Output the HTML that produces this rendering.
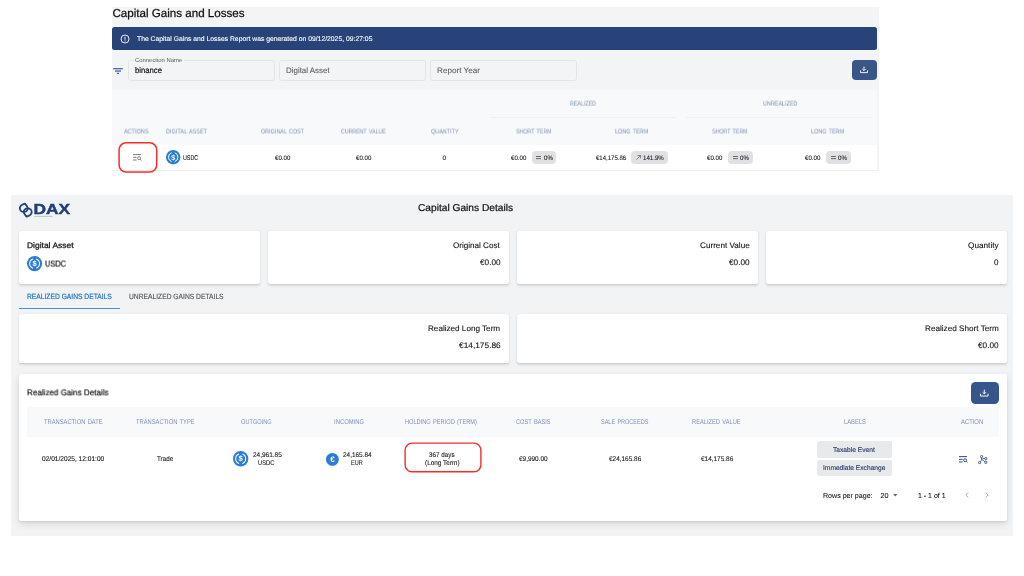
<!DOCTYPE html>
<html lang="en">
<head>
<meta charset="utf-8">
<title>Capital Gains and Losses</title>
<style>
html,body{margin:0;padding:0;background:#fff;}
body{width:1024px;height:576px;position:relative;overflow:hidden;font-family:"Liberation Sans", sans-serif;text-rendering:geometricPrecision;}
#page{position:absolute;left:0;top:0;width:1024px;height:576px;will-change:transform;}
.t{position:absolute;white-space:pre;line-height:1;transform-origin:0 0;}
svg{position:absolute;overflow:visible;}
</style>
</head>
<body>
<div id="page">
<div style="position:absolute;left:112px;top:7px;width:767px;height:164px;background:#f3f4f6;border-radius:0px;"></div>
<div style="position:absolute;left:112px;top:27px;width:765px;height:23.4px;background:#284377;border-radius:2.5px;"></div>
<svg style="left:120.3px;top:33.6px" width="10" height="10" viewBox="0 0 10 10"><circle cx="5" cy="5" r="4" fill="none" stroke="#fff" stroke-width="0.9"/><rect x="4.55" y="2.8" width="0.9" height="2.9" fill="#fff"/><rect x="4.55" y="6.4" width="0.9" height="0.9" fill="#fff"/></svg>
<svg style="left:113px;top:68px" width="10" height="6" viewBox="0 0 10 6"><g fill="#2f4d8f"><rect x="0.2" y="0.2" width="9.6" height="1.1"/><rect x="2" y="2.5" width="6" height="1.1"/><rect x="3.9" y="4.8" width="2.2" height="1.1"/></g></svg>
<div style="position:absolute;left:128px;top:60px;width:147px;height:21px;background:transparent;border-radius:2.5px;border:1px solid #e3e4e6;box-sizing:border-box;"></div>
<div style="position:absolute;left:278.6px;top:60px;width:147px;height:21px;background:transparent;border-radius:2.5px;border:1px solid #e3e4e6;box-sizing:border-box;"></div>
<div style="position:absolute;left:430px;top:60px;width:147px;height:21px;background:transparent;border-radius:2.5px;border:1px solid #e3e4e6;box-sizing:border-box;"></div>
<div style="position:absolute;left:133.5px;top:60px;width:50px;height:2px;background:#f3f4f6;border-radius:0px;"></div>
<div style="position:absolute;left:851.8px;top:60.3px;width:25px;height:19.8px;background:#3a5688;border-radius:4px;"></div>
<svg style="left:860.3px;top:66.2px" width="8" height="7.2" viewBox="0 0 8 7.2"><g fill="none" stroke="#fff" stroke-width="0.9"><path d="M4 0.6 V4.4 M2.4 3 L4 4.6 L5.6 3"/><path d="M0.5 4.4 V6.6 H7.5 V4.4"/></g></svg>
<div style="position:absolute;left:112px;top:90px;width:765px;height:55px;background:#f8f9fb;border-radius:0px;"></div>
<div style="position:absolute;left:112px;top:145px;width:765px;height:25px;background:#fff;border-radius:0px;"></div>
<div style="position:absolute;left:112px;top:170px;width:765px;height:1px;background:#eef0f2;border-radius:0px;"></div>
<div style="position:absolute;left:490px;top:117px;width:186px;height:1px;background:#eef0f3;border-radius:0px;"></div>
<div style="position:absolute;left:686px;top:117px;width:186px;height:1px;background:#eef0f3;border-radius:0px;"></div>
<svg style="left:117px;top:141px" width="42" height="32" viewBox="0 0 42 32"><rect x="2.1" y="1.8" width="37.6" height="29.2" rx="7" fill="none" stroke="#fa2b2b" stroke-width="1.5"/></svg>
<svg style="left:132.6px;top:154.1px" width="9.0" height="7.0" viewBox="0 0 9 7"><g fill="#777a80"><rect x="0" y="0.1" width="8" height="1"/><rect x="0" y="2.8" width="3.6" height="1"/><rect x="0" y="5.5" width="3.6" height="1"/></g><circle cx="6.1" cy="4.2" r="1.5" fill="none" stroke="#777a80" stroke-width="0.95"/><path d="M7.2 5.3 L8.5 6.6" stroke="#777a80" stroke-width="0.95"/></svg>
<svg style="left:166.0px;top:150.20000000000002px" width="14.4" height="14.4" viewBox="0 0 32 32"><circle cx="16" cy="16" r="16" fill="#2a7cd6"/><path d="M12.5 6.2 A10.4 10.4 0 0 0 12.5 25.8 M19.5 6.2 A10.4 10.4 0 0 1 19.5 25.8" fill="none" stroke="#fff" stroke-width="2.2"/><text x="16" y="21.8" text-anchor="middle" font-family="Liberation Sans, sans-serif" font-weight="700" font-size="16" fill="#fff">$</text></svg>
<div style="position:absolute;left:531.8px;top:151px;width:24.4px;height:12.6px;background:#e0e1e4;border-radius:4px;"></div>
<div style="position:absolute;left:631.4px;top:151px;width:36.6px;height:12.6px;background:#e0e1e4;border-radius:4px;"></div>
<div style="position:absolute;left:728px;top:151px;width:24.6px;height:12.6px;background:#e0e1e4;border-radius:4px;"></div>
<div style="position:absolute;left:826px;top:151px;width:24.5px;height:12.6px;background:#e0e1e4;border-radius:4px;"></div>
<svg style="left:536.3px;top:155.6px" width="5" height="3.4" viewBox="0 0 5 3.4"><rect x="0" y="0.3" width="5" height="0.7" fill="#333"/><rect x="0" y="2.4" width="5" height="0.7" fill="#333"/></svg>
<svg style="left:732.5px;top:155.6px" width="5" height="3.4" viewBox="0 0 5 3.4"><rect x="0" y="0.3" width="5" height="0.7" fill="#333"/><rect x="0" y="2.4" width="5" height="0.7" fill="#333"/></svg>
<svg style="left:830.5px;top:155.6px" width="5" height="3.4" viewBox="0 0 5 3.4"><rect x="0" y="0.3" width="5" height="0.7" fill="#333"/><rect x="0" y="2.4" width="5" height="0.7" fill="#333"/></svg>
<svg style="left:635.8px;top:154.8px" width="5" height="5" viewBox="0 0 5 5"><path d="M0.4 4.6 L4.5 0.5 M1.6 0.5 H4.5 V3.4" fill="none" stroke="#444" stroke-width="0.6"/></svg>
<div style="position:absolute;left:10.8px;top:195px;width:1002.5px;height:341.4px;background:#f2f3f5;border-radius:0px;"></div>
<svg style="left:18px;top:202px" width="54" height="17" viewBox="0 0 54 17"><g fill="none" stroke="#213f7a" stroke-width="1.8" stroke-linejoin="round"><path d="M6.9 1.6 C4.2 2.4 1.8 4.2 1.8 6.2 C1.8 8.4 3.6 9.9 5.8 9.9 C8 9.9 9.8 8.3 9.8 6.2 C9.8 4.6 8.4 3.4 6.9 1.6 Z"/><path d="M8.6 14.6 C11.3 13.8 13.7 12 13.7 10 C13.7 7.8 11.9 6.3 9.7 6.3 C7.5 6.3 5.7 7.9 5.7 10 C5.7 11.6 7.1 12.8 8.6 14.6 Z"/></g><text x="15.6" y="11.6" font-family="Liberation Sans, sans-serif" font-weight="700" font-size="14.4" fill="#213f7a" stroke="#213f7a" stroke-width="0.45" textLength="36.6" lengthAdjust="spacingAndGlyphs">DAX</text><rect x="16.2" y="13.9" width="18.4" height="0.8" fill="#aab7d2"/></svg>
<div style="position:absolute;left:19px;top:231.2px;width:240.5px;height:52.8px;background:#fff;border-radius:2.5px;box-shadow:0 1.5px 3px rgba(0,0,0,0.11),0 0.5px 1.5px rgba(0,0,0,0.06);"></div>
<div style="position:absolute;left:268px;top:231.2px;width:240.5px;height:52.8px;background:#fff;border-radius:2.5px;box-shadow:0 1.5px 3px rgba(0,0,0,0.11),0 0.5px 1.5px rgba(0,0,0,0.06);"></div>
<div style="position:absolute;left:517px;top:231.2px;width:240.5px;height:52.8px;background:#fff;border-radius:2.5px;box-shadow:0 1.5px 3px rgba(0,0,0,0.11),0 0.5px 1.5px rgba(0,0,0,0.06);"></div>
<div style="position:absolute;left:766px;top:231.2px;width:240.5px;height:52.8px;background:#fff;border-radius:2.5px;box-shadow:0 1.5px 3px rgba(0,0,0,0.11),0 0.5px 1.5px rgba(0,0,0,0.06);"></div>
<svg style="left:27.0px;top:256.0px" width="15.2" height="15.2" viewBox="0 0 32 32"><circle cx="16" cy="16" r="16" fill="#2a7cd6"/><path d="M12.5 6.2 A10.4 10.4 0 0 0 12.5 25.8 M19.5 6.2 A10.4 10.4 0 0 1 19.5 25.8" fill="none" stroke="#fff" stroke-width="2.2"/><text x="16" y="21.8" text-anchor="middle" font-family="Liberation Sans, sans-serif" font-weight="700" font-size="16" fill="#fff">$</text></svg>
<div style="position:absolute;left:19px;top:308px;width:101px;height:1px;background:#4a90d9;border-radius:0px;"></div>
<div style="position:absolute;left:19px;top:314px;width:489.5px;height:49.2px;background:#fff;border-radius:2.5px;box-shadow:0 1.5px 3px rgba(0,0,0,0.11),0 0.5px 1.5px rgba(0,0,0,0.06);"></div>
<div style="position:absolute;left:517px;top:314px;width:489.5px;height:49.2px;background:#fff;border-radius:2.5px;box-shadow:0 1.5px 3px rgba(0,0,0,0.11),0 0.5px 1.5px rgba(0,0,0,0.06);"></div>
<div style="position:absolute;left:19px;top:374px;width:987.5px;height:146.5px;background:#fff;border-radius:2.5px;box-shadow:0 3px 7px rgba(0,0,0,0.12),0 1px 2px rgba(0,0,0,0.07);"></div>
<div style="position:absolute;left:971px;top:382px;width:27.6px;height:21.5px;background:#36558b;border-radius:4.5px;"></div>
<svg style="left:980.3px;top:388.6px" width="8.6" height="7.7" viewBox="0 0 8 7.2"><g fill="none" stroke="#fff" stroke-width="0.9"><path d="M4 0.6 V4.4 M2.4 3 L4 4.6 L5.6 3"/><path d="M0.5 4.4 V6.6 H7.5 V4.4"/></g></svg>
<div style="position:absolute;left:27px;top:407px;width:971.5px;height:29.5px;background:#f8f9fb;border-radius:0px;"></div>
<svg style="left:233.10000000000002px;top:451.0px" width="15.4" height="15.4" viewBox="0 0 32 32"><circle cx="16" cy="16" r="16" fill="#2a7cd6"/><path d="M12.5 6.2 A10.4 10.4 0 0 0 12.5 25.8 M19.5 6.2 A10.4 10.4 0 0 1 19.5 25.8" fill="none" stroke="#fff" stroke-width="2.2"/><text x="16" y="21.8" text-anchor="middle" font-family="Liberation Sans, sans-serif" font-weight="700" font-size="16" fill="#fff">$</text></svg>
<svg style="left:326.3px;top:452.5px" width="12.8" height="12.8" viewBox="0 0 32 32"><circle cx="16" cy="16" r="16" fill="#2a7cd6"/><text x="16.5" y="23" text-anchor="middle" font-family="Liberation Sans, sans-serif" font-weight="700" font-size="20" fill="#fff">€</text></svg>
<svg style="left:403px;top:441px" width="80" height="33" viewBox="0 0 80 33"><rect x="2.1" y="2.1" width="75.8" height="28.6" rx="7" fill="none" stroke="#fa2b2b" stroke-width="1.4"/></svg>
<div style="position:absolute;left:817px;top:441.3px;width:75px;height:16.3px;background:#e8e9eb;border-radius:2.5px;"></div>
<div style="position:absolute;left:817px;top:459.8px;width:75px;height:16.5px;background:#e8e9eb;border-radius:2.5px;"></div>
<svg style="left:958.8px;top:455.5px" width="9.0" height="7.0" viewBox="0 0 9 7"><g fill="#2f4a80"><rect x="0" y="0.1" width="8" height="1"/><rect x="0" y="2.8" width="3.6" height="1"/><rect x="0" y="5.5" width="3.6" height="1"/></g><circle cx="6.1" cy="4.2" r="1.5" fill="none" stroke="#2f4a80" stroke-width="0.95"/><path d="M7.2 5.3 L8.5 6.6" stroke="#2f4a80" stroke-width="0.95"/></svg>
<svg style="left:977.5px;top:454.5px" width="10" height="9.5" viewBox="0 0 10 9.5"><g fill="none" stroke="#2f4a80" stroke-width="0.9"><circle cx="3.6" cy="1.6" r="1.1"/><circle cx="1.6" cy="7.6" r="1.1"/><circle cx="7.8" cy="3.6" r="1.1"/><circle cx="7.8" cy="7.4" r="1.1"/><path d="M3.6 2.7 C3.6 5.5 3 6 2.2 6.7 M3.7 4.6 C5 5 6 5.6 6.9 6.8 M4.6 3.6 H6.7"/></g></svg>
<svg style="left:892.8px;top:494px" width="4.6" height="2.6" viewBox="0 0 5 3"><path d="M0 0 H5 L2.5 2.8 Z" fill="#666"/></svg>
<svg style="left:964.5px;top:492.2px" width="4" height="6" viewBox="0 0 4 6"><path d="M3.4 0.5 L0.8 3 L3.4 5.5" fill="none" stroke="#a0a0a0" stroke-width="0.9"/></svg>
<svg style="left:985.3px;top:492.2px" width="4" height="6" viewBox="0 0 4 6"><path d="M0.6 0.5 L3.2 3 L0.6 5.5" fill="none" stroke="#a0a0a0" stroke-width="0.9"/></svg>
<div class="t" style="left:112.43px;top:8px;font-size:11.6px;color:#111;-webkit-text-stroke:0.25px #111;">Capital Gains and Losses</div>
<div class="t" style="left:136.88px;top:36px;font-size:6.8px;color:#fff;-webkit-text-stroke:0.1px #fff;transform:translateY(0.70px);will-change:transform;">The Capital Gains and Losses Report was generated on 09/12/2025, 09:27:05</div>
<div class="t" style="left:135.00px;top:58px;font-size:5.8px;color:#555;transform:translateY(0.73px) scaleX(1.0177);will-change:transform;">Connection Name</div>
<div class="t" style="left:135.00px;top:67px;font-size:8.2px;color:#111;-webkit-text-stroke:0.2px #111;transform:scaleX(0.9411);">binance</div>
<div class="t" style="left:285.90px;top:67px;font-size:8.0px;color:#5f5f5f;-webkit-text-stroke:0.1px #5f5f5f;transform:scaleX(0.9918);">Digital Asset</div>
<div class="t" style="left:437.00px;top:67px;font-size:8.0px;color:#5f5f5f;-webkit-text-stroke:0.1px #5f5f5f;transform:scaleX(1.0191);">Report Year</div>
<div class="t" style="left:570.00px;top:101px;font-size:6.5px;color:#7e90b0;transform:translateY(0.60px) scaleX(0.8190);will-change:transform;">REALIZED</div>
<div class="t" style="left:762.50px;top:101px;font-size:6.5px;color:#7e90b0;transform:translateY(0.60px) scaleX(0.8293);will-change:transform;">UNREALIZED</div>
<div class="t" style="left:124.44px;top:129px;font-size:6.5px;color:#7e90b0;transform:translateY(0.50px) scaleX(0.8542);will-change:transform;">ACTIONS</div>
<div class="t" style="left:166.00px;top:129px;font-size:6.5px;color:#7e90b0;word-spacing:0.9px;transform:translateY(0.50px) scaleX(0.8493);will-change:transform;">DIGITAL ASSET</div>
<div class="t" style="left:261.00px;top:129px;font-size:6.5px;color:#7e90b0;word-spacing:0.9px;transform:translateY(0.50px) scaleX(0.8340);will-change:transform;">ORIGINAL COST</div>
<div class="t" style="left:341.25px;top:129px;font-size:6.5px;color:#7e90b0;word-spacing:0.9px;transform:translateY(0.50px) scaleX(0.8117);will-change:transform;">CURRENT VALUE</div>
<div class="t" style="left:430.75px;top:129px;font-size:6.5px;color:#7e90b0;transform:translateY(0.50px) scaleX(0.8427);will-change:transform;">QUANTITY</div>
<div class="t" style="left:515.88px;top:129px;font-size:6.5px;color:#7e90b0;word-spacing:0.9px;transform:translateY(0.50px) scaleX(0.8168);will-change:transform;">SHORT TERM</div>
<div class="t" style="left:615.00px;top:129px;font-size:6.5px;color:#7e90b0;word-spacing:0.9px;transform:translateY(0.50px) scaleX(0.8462);will-change:transform;">LONG TERM</div>
<div class="t" style="left:711.88px;top:129px;font-size:6.5px;color:#7e90b0;word-spacing:0.9px;transform:translateY(0.50px) scaleX(0.8168);will-change:transform;">SHORT TERM</div>
<div class="t" style="left:811.00px;top:129px;font-size:6.5px;color:#7e90b0;word-spacing:0.9px;transform:translateY(0.50px) scaleX(0.8462);will-change:transform;">LONG TERM</div>
<div class="t" style="left:183.20px;top:155px;font-size:7.0px;color:#111;-webkit-text-stroke:0.1px #111;transform:scaleX(0.7627);">USDC</div>
<div class="t" style="left:274.70px;top:156px;font-size:6.5px;color:#111;-webkit-text-stroke:0.08px #111;transform:scaleX(0.9404);">€0.00</div>
<div class="t" style="left:355.70px;top:156px;font-size:6.5px;color:#111;-webkit-text-stroke:0.08px #111;transform:scaleX(0.9404);">€0.00</div>
<div class="t" style="left:442.53px;top:156px;font-size:6.5px;color:#111;-webkit-text-stroke:0.08px #111;">0</div>
<div class="t" style="left:511.30px;top:156px;font-size:6.5px;color:#111;-webkit-text-stroke:0.08px #111;transform:scaleX(0.9404);">€0.00</div>
<div class="t" style="left:543.80px;top:156px;font-size:6.5px;color:#111;-webkit-text-stroke:0.08px #111;transform:scaleX(0.9556);">0%</div>
<div class="t" style="left:595.60px;top:156px;font-size:6.5px;color:#111;-webkit-text-stroke:0.08px #111;transform:scaleX(0.9262);">€14,175.86</div>
<div class="t" style="left:643.21px;top:156px;font-size:6.5px;color:#111;-webkit-text-stroke:0.08px #111;transform:scaleX(0.9451);">141.9%</div>
<div class="t" style="left:707.30px;top:156px;font-size:6.5px;color:#111;-webkit-text-stroke:0.08px #111;transform:scaleX(0.9404);">€0.00</div>
<div class="t" style="left:740.00px;top:156px;font-size:6.5px;color:#111;-webkit-text-stroke:0.08px #111;transform:scaleX(0.9556);">0%</div>
<div class="t" style="left:805.40px;top:156px;font-size:6.5px;color:#111;-webkit-text-stroke:0.08px #111;transform:scaleX(0.9404);">€0.00</div>
<div class="t" style="left:838.00px;top:156px;font-size:6.5px;color:#111;-webkit-text-stroke:0.08px #111;transform:scaleX(0.9556);">0%</div>
<div class="t" style="left:418.19px;top:204px;font-size:10.0px;color:#111;-webkit-text-stroke:0.22px #111;transform:translateY(0.30px) scaleX(1.0178);will-change:transform;">Capital Gains Details</div>
<div class="t" style="left:27.00px;top:242px;font-size:8.0px;color:#111;-webkit-text-stroke:0.25px #111;transform:scaleX(1.0571);">Digital Asset</div>
<div class="t" style="left:45.00px;top:259px;font-size:8.6px;color:#111;-webkit-text-stroke:0.22px #111;transform:translateY(0.55px) scaleX(0.8583);will-change:transform;">USDC</div>
<div class="t" style="left:453.13px;top:242px;font-size:8.0px;color:#111;-webkit-text-stroke:0.1px #111;transform:translateY(0.30px) scaleX(1.0112);will-change:transform;">Original Cost</div>
<div class="t" style="left:479.66px;top:258px;font-size:8.0px;color:#111;-webkit-text-stroke:0.1px #111;transform:translateY(0.70px) scaleX(1.0272);will-change:transform;">€0.00</div>
<div class="t" style="left:699.64px;top:242px;font-size:8.0px;color:#111;-webkit-text-stroke:0.1px #111;transform:translateY(0.30px) scaleX(1.0199);will-change:transform;">Current Value</div>
<div class="t" style="left:728.66px;top:258px;font-size:8.0px;color:#111;-webkit-text-stroke:0.1px #111;transform:translateY(0.70px) scaleX(1.0272);will-change:transform;">€0.00</div>
<div class="t" style="left:967.68px;top:242px;font-size:8.0px;color:#111;-webkit-text-stroke:0.1px #111;transform:translateY(0.30px) scaleX(1.0272);will-change:transform;">Quantity</div>
<div class="t" style="left:993.59px;top:258px;font-size:8.0px;color:#111;-webkit-text-stroke:0.1px #111;transform:translateY(0.70px);will-change:transform;">0</div>
<div class="t" style="left:27.30px;top:293px;font-size:7.6px;color:#1f74cf;-webkit-text-stroke:0.22px #1f74cf;transform:scaleX(0.8827);">REALIZED GAINS DETAILS</div>
<div class="t" style="left:129.00px;top:293px;font-size:7.6px;color:#555;-webkit-text-stroke:0.15px #555;transform:scaleX(0.8837);">UNREALIZED GAINS DETAILS</div>
<div class="t" style="left:428.20px;top:325px;font-size:8.0px;color:#111;-webkit-text-stroke:0.1px #111;transform:scaleX(1.0156);">Realized Long Term</div>
<div class="t" style="left:458.63px;top:342px;font-size:8.0px;color:#111;-webkit-text-stroke:0.1px #111;transform:scaleX(1.0423);">€14,175.86</div>
<div class="t" style="left:924.70px;top:325px;font-size:8.0px;color:#111;-webkit-text-stroke:0.1px #111;transform:scaleX(1.0208);">Realized Short Term</div>
<div class="t" style="left:977.66px;top:342px;font-size:8.0px;color:#111;-webkit-text-stroke:0.1px #111;transform:scaleX(1.0272);">€0.00</div>
<div class="t" style="left:27.30px;top:389px;font-size:8.2px;color:#111;-webkit-text-stroke:0.18px #111;transform:translateY(0.30px) scaleX(0.9842);will-change:transform;">Realized Gains Details</div>
<div class="t" style="left:43.68px;top:420px;font-size:6.8px;color:#7e90b0;word-spacing:0.9px;transform:scaleX(0.8482);">TRANSACTION DATE</div>
<div class="t" style="left:135.68px;top:420px;font-size:6.8px;color:#7e90b0;word-spacing:0.9px;transform:scaleX(0.8482);">TRANSACTION TYPE</div>
<div class="t" style="left:241.25px;top:420px;font-size:6.8px;color:#7e90b0;transform:scaleX(0.8281);">OUTGOING</div>
<div class="t" style="left:334.00px;top:420px;font-size:6.8px;color:#7e90b0;transform:scaleX(0.8657);">INCOMING</div>
<div class="t" style="left:405.25px;top:420px;font-size:6.8px;color:#7e90b0;word-spacing:0.9px;transform:scaleX(0.8314);">HOLDING PERIOD (TERM)</div>
<div class="t" style="left:515.73px;top:420px;font-size:6.8px;color:#7e90b0;word-spacing:0.9px;transform:scaleX(0.8308);">COST BASIS</div>
<div class="t" style="left:600.88px;top:420px;font-size:6.8px;color:#7e90b0;word-spacing:0.9px;transform:scaleX(0.8124);">SALE PROCEEDS</div>
<div class="t" style="left:692.25px;top:420px;font-size:6.8px;color:#7e90b0;word-spacing:0.9px;transform:scaleX(0.8411);">REALIZED VALUE</div>
<div class="t" style="left:843.50px;top:420px;font-size:6.8px;color:#7e90b0;transform:scaleX(0.8552);">LABELS</div>
<div class="t" style="left:961.36px;top:420px;font-size:6.8px;color:#7e90b0;transform:scaleX(0.8624);">ACTION</div>
<div class="t" style="left:42.00px;top:457px;font-size:6.8px;color:#111;-webkit-text-stroke:0.08px #111;transform:scaleX(0.9688);">02/01/2025, 12:01:00</div>
<div class="t" style="left:156.75px;top:457px;font-size:6.8px;color:#111;-webkit-text-stroke:0.08px #111;transform:scaleX(0.9250);">Trade</div>
<div class="t" style="left:252.70px;top:453px;font-size:6.8px;color:#111;-webkit-text-stroke:0.08px #111;transform:scaleX(0.9500);">24,961.85</div>
<div class="t" style="left:258.10px;top:461px;font-size:6.9px;color:#111;-webkit-text-stroke:0.08px #111;transform:scaleX(0.8335);">USDC</div>
<div class="t" style="left:343.27px;top:453px;font-size:6.8px;color:#111;-webkit-text-stroke:0.08px #111;transform:scaleX(0.9442);">24,165.84</div>
<div class="t" style="left:351.00px;top:461px;font-size:6.9px;color:#111;-webkit-text-stroke:0.08px #111;transform:scaleX(0.8000);">EUR</div>
<div class="t" style="left:429.07px;top:453px;font-size:6.8px;color:#111;-webkit-text-stroke:0.08px #111;transform:scaleX(0.9271);">367 days</div>
<div class="t" style="left:424.70px;top:461px;font-size:6.8px;color:#111;-webkit-text-stroke:0.08px #111;transform:scaleX(0.9462);">(Long Term)</div>
<div class="t" style="left:518.80px;top:457px;font-size:6.8px;color:#111;-webkit-text-stroke:0.08px #111;transform:scaleX(0.9467);">€9,990.00</div>
<div class="t" style="left:609.10px;top:457px;font-size:6.8px;color:#111;-webkit-text-stroke:0.08px #111;transform:scaleX(0.9471);">€24,165.86</div>
<div class="t" style="left:701.07px;top:457px;font-size:6.8px;color:#111;-webkit-text-stroke:0.08px #111;transform:scaleX(0.9479);">€14,175.86</div>
<div class="t" style="left:833.47px;top:448px;font-size:6.8px;color:#1c2f5e;-webkit-text-stroke:0.1px #1c2f5e;transform:scaleX(0.9773);">Taxable Event</div>
<div class="t" style="left:823.35px;top:466px;font-size:6.8px;color:#1c2f5e;-webkit-text-stroke:0.1px #1c2f5e;transform:scaleX(0.9775);">Immediate Exchange</div>
<div class="t" style="left:823.00px;top:492px;font-size:7.2px;color:#111;-webkit-text-stroke:0.08px #111;transform:scaleX(0.9845);">Rows per page:</div>
<div class="t" style="left:880.50px;top:492px;font-size:7.2px;color:#111;-webkit-text-stroke:0.08px #111;">20</div>
<div class="t" style="left:917.77px;top:492px;font-size:7.2px;color:#111;-webkit-text-stroke:0.08px #111;transform:scaleX(0.9749);">1 - 1 of 1</div>
</div>
</body>
</html>
